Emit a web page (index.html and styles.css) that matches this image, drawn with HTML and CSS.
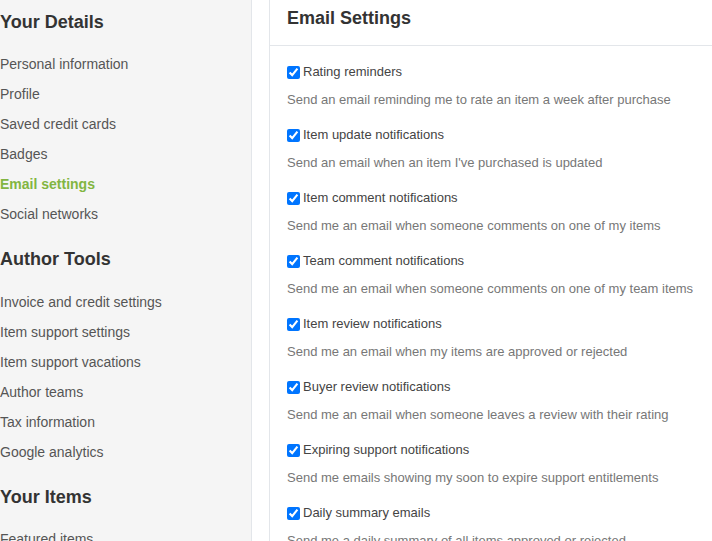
FILE: index.html
```html
<!DOCTYPE html>
<html>
<head>
<meta charset="utf-8">
<link rel="stylesheet" href="styles.css">
</head>
<body>
<div class="page">
  <aside class="sidebar">
    <section class="nav-section">
      <h2 class="nav-title">Your Details</h2>
      <a class="nav-link">Personal information</a>
      <a class="nav-link">Profile</a>
      <a class="nav-link">Saved credit cards</a>
      <a class="nav-link">Badges</a>
      <a class="nav-link active">Email settings</a>
      <a class="nav-link">Social networks</a>
    </section>
    <section class="nav-section">
      <h2 class="nav-title">Author Tools</h2>
      <a class="nav-link">Invoice and credit settings</a>
      <a class="nav-link">Item support settings</a>
      <a class="nav-link">Item support vacations</a>
      <a class="nav-link">Author teams</a>
      <a class="nav-link">Tax information</a>
      <a class="nav-link">Google analytics</a>
    </section>
    <section class="nav-section">
      <h2 class="nav-title">Your Items</h2>
      <a class="nav-link">Featured items</a>
    </section>
  </aside>
  <main class="main">
    <header class="main-header">
      <h1 class="main-title">Email Settings</h1>
    </header>
    <div class="settings">
      <div class="setting">
        <label class="setting-label"><input type="checkbox" checked>Rating reminders</label>
        <p class="setting-desc">Send an email reminding me to rate an item a week after purchase</p>
      </div>
      <div class="setting">
        <label class="setting-label"><input type="checkbox" checked>Item update notifications</label>
        <p class="setting-desc">Send an email when an item I've purchased is updated</p>
      </div>
      <div class="setting">
        <label class="setting-label"><input type="checkbox" checked>Item comment notifications</label>
        <p class="setting-desc">Send me an email when someone comments on one of my items</p>
      </div>
      <div class="setting">
        <label class="setting-label"><input type="checkbox" checked>Team comment notifications</label>
        <p class="setting-desc">Send me an email when someone comments on one of my team items</p>
      </div>
      <div class="setting">
        <label class="setting-label"><input type="checkbox" checked>Item review notifications</label>
        <p class="setting-desc">Send me an email when my items are approved or rejected</p>
      </div>
      <div class="setting">
        <label class="setting-label"><input type="checkbox" checked>Buyer review notifications</label>
        <p class="setting-desc">Send me an email when someone leaves a review with their rating</p>
      </div>
      <div class="setting">
        <label class="setting-label"><input type="checkbox" checked>Expiring support notifications</label>
        <p class="setting-desc">Send me emails showing my soon to expire support entitlements</p>
      </div>
      <div class="setting">
        <label class="setting-label"><input type="checkbox" checked>Daily summary emails</label>
        <p class="setting-desc">Send me a daily summary of all items approved or rejected</p>
      </div>
    </div>
  </main>
</div>
</body>
</html>
```

FILE: styles.css
```css
html, body {
  margin: 0;
  padding: 0;
  height: 100%;
  overflow: hidden;
  background: #fff;
  font-family: "Liberation Sans", Arial, sans-serif;
}

.page {
  display: flex;
  align-items: stretch;
  min-height: 100%;
}

.sidebar {
  width: 251px;
  flex: none;
  background: #f5f5f5;
  border-right: 1px solid #e3e6ea;
  padding-top: 9.5px;
  box-sizing: content-box;
}

.nav-section {
  display: flex;
  flex-direction: column;
  margin-bottom: 18px;
}

.nav-title {
  margin: 0 0 15.5px 0;
  font-size: 18px;
  line-height: 24px;
  font-weight: bold;
  color: #333;
}

.nav-link {
  font-size: 14px;
  line-height: 30px;
  color: #555;
  white-space: nowrap;
}

.nav-link.active {
  color: #82b541;
  font-weight: bold;
}

.main {
  flex: 1;
  margin-left: 17px;
  border-left: 1px solid #e3e6ea;
}

.main-header {
  padding: 6px 17px 15px 17px;
  border-bottom: 1px solid #e3e6ea;
}

.main-title {
  margin: 0;
  font-size: 18px;
  line-height: 24px;
  font-weight: bold;
  color: #333;
}

.settings {
  padding: 16px 17px 0 17px;
  display: flex;
  flex-direction: column;
  gap: 15px;
}

.setting-label {
  display: flex;
  align-items: center;
  font-size: 13px;
  line-height: 20px;
  color: #444;
}

.setting-label input {
  width: 13px;
  height: 13px;
  margin: 0 3px 0 0;
}

.setting-desc {
  margin: 8px 0 0 0;
  font-size: 13px;
  line-height: 20px;
  color: #777;
  white-space: nowrap;
}
```
